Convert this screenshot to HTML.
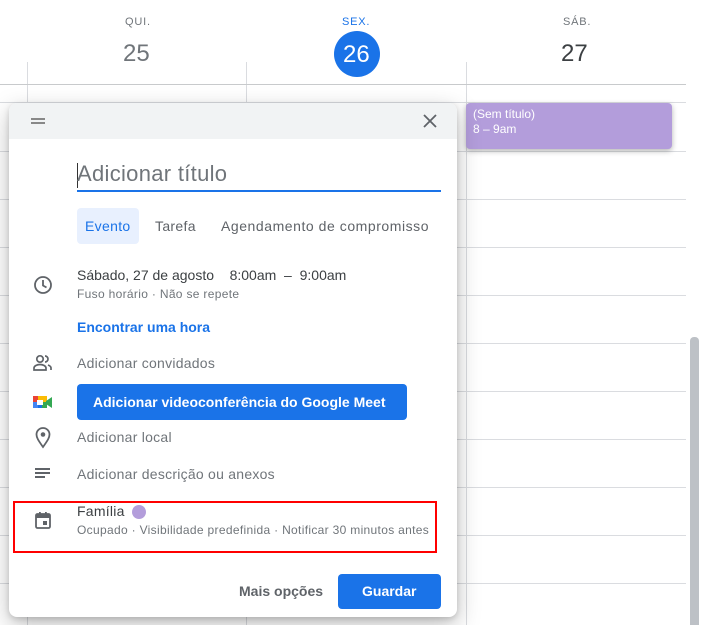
<!DOCTYPE html>
<html><head><meta charset="utf-8"><style>
*{margin:0;padding:0;box-sizing:border-box}
body{width:703px;height:625px;overflow:hidden;background:#fff;font-family:"Liberation Sans",Arial,sans-serif;position:relative;color:#3c4043}
.a{position:absolute}
.h{position:absolute;left:0;width:686px;height:1px;background:#dadce0}
.v{position:absolute;top:62px;width:1px;height:563px;background:#dadce0}
.t{position:absolute;white-space:nowrap}
.s{letter-spacing:.32px}
.g{letter-spacing:.25px}
</style></head><body>
<div class="t" style="left:125px;top:16px;font-size:11px;color:#70757a;letter-spacing:.8px">QUI.</div>
<div class="t" style="left:123px;top:40px;font-size:24px;color:#70757a">25</div>
<div class="t" style="left:342px;top:16px;font-size:11px;color:#1a73e8;letter-spacing:.8px">SEX.</div>
<div class="a" style="left:334px;top:31px;width:46px;height:46px;border-radius:50%;background:#1a73e8"></div>
<div class="t" style="left:343px;top:41px;font-size:24px;color:#fff">26</div>
<div class="t" style="left:563px;top:16px;font-size:11px;color:#70757a;letter-spacing:.8px">SÁB.</div>
<div class="t" style="left:561px;top:40px;font-size:24px;color:#3c4043">27</div>
<div class="v" style="left:27px"></div><div class="v" style="left:246px"></div><div class="v" style="left:466px"></div>
<div class="h" style="top:84px;background:#c8cacc"></div>
<div class="h" style="top:102px"></div>
<div class="h" style="top:151px"></div><div class="h" style="top:199px"></div><div class="h" style="top:247px"></div><div class="h" style="top:295px"></div><div class="h" style="top:343px"></div><div class="h" style="top:391px"></div><div class="h" style="top:439px"></div><div class="h" style="top:487px"></div><div class="h" style="top:535px"></div><div class="h" style="top:583px"></div>
<div class="a" style="left:690px;top:337px;width:9px;height:288px;background:#bdc1c6;border-radius:4px 4px 0 0"></div>
<div class="a" style="left:466px;top:103px;width:206px;height:46px;background:#b39ddb;border-radius:4px;box-shadow:0 2px 6px rgba(0,0,0,.3)"></div>
<div class="t" style="left:473px;top:107px;font-size:12px;color:#fff">(Sem título)</div>
<div class="t" style="left:473px;top:122px;font-size:12px;color:#fff">8 – 9am</div>

<div class="a" style="left:9px;top:103px;width:448px;height:514px;background:#fff;border-radius:8px;box-shadow:0 8px 24px rgba(0,0,0,.25),0 2px 6px rgba(0,0,0,.15);overflow:hidden">
 <div class="a" style="left:0;top:0;width:448px;height:36px;background:#f1f3f4"></div>
 <div class="a" style="left:22px;top:15px;width:14px;height:1.5px;background:#888"></div>
 <div class="a" style="left:22px;top:19px;width:14px;height:1.5px;background:#888"></div>
 <svg class="a" style="left:414px;top:11px" width="14" height="14"><path d="M1 1L13 13M13 1L1 13" stroke="#5f6368" stroke-width="1.8"/></svg>
 <div class="a" style="left:68px;top:60px;width:1px;height:25px;background:#333"></div>
 <div class="t" style="left:68px;top:58px;font-size:22px;color:#70757a;letter-spacing:.3px">Adicionar título</div>
 <div class="a" style="left:68px;top:87px;width:364px;height:2px;background:#1a73e8"></div>
 <div class="a" style="left:68px;top:105px;width:62px;height:36px;background:#e8f0fe;border-radius:4px"></div>
 <div class="t s" style="left:76px;top:115px;font-size:14px;color:#1a73e8">Evento</div>
 <div class="t s" style="left:146px;top:115px;font-size:14px;color:#5f6368">Tarefa</div>
 <div class="t" style="left:212px;top:115px;font-size:14px;color:#5f6368;letter-spacing:.55px">Agendamento de compromisso</div>
 <svg class="a" style="left:24px;top:172px" width="20" height="20"><circle cx="10" cy="10" r="8" fill="none" stroke="#5f6368" stroke-width="1.8"/><path d="M10 5v5.5l3.5 2" fill="none" stroke="#5f6368" stroke-width="1.8"/></svg>
 <div class="t" style="left:68px;top:164px;font-size:14px;color:#3c4043">Sábado, 27 de agosto&nbsp;&nbsp;&nbsp; 8:00am &nbsp;–&nbsp; 9:00am</div>
 <div class="t s" style="left:68px;top:184px;font-size:12px;color:#70757a">Fuso horário · Não se repete</div>
 <div class="t" style="left:68px;top:216px;font-size:14px;color:#1a73e8;font-weight:bold">Encontrar uma hora</div>
 <svg class="a" style="left:24px;top:251px" width="20" height="18"><circle cx="7" cy="5" r="3.2" fill="none" stroke="#5f6368" stroke-width="1.7"/><path d="M1 16v-2c0-2 3-3.5 6-3.5s6 1.5 6 3.5v2z" fill="none" stroke="#5f6368" stroke-width="1.7"/><path d="M12 2a3 3 0 010 6M15 11c2 .7 3 1.7 3 3v2" fill="none" stroke="#5f6368" stroke-width="1.7"/></svg>
 <div class="t g" style="left:68px;top:252px;font-size:14px;color:#70757a">Adicionar convidados</div>
 <svg class="a" style="left:24px;top:290px" width="20" height="18"><rect x="0" y="3" width="14" height="12" fill="#fbbc04"/><rect x="0" y="9" width="14" height="6" fill="#1a73e8"/><rect x="0" y="3" width="5" height="12" fill="#4285f4"/><rect x="0" y="3" width="5" height="6" fill="#ea4335"/><rect x="9" y="9" width="5" height="6" fill="#34a853"/><rect x="4" y="7" width="6" height="5" fill="#fff"/><path d="M13 8l6-4v11l-6-4z" fill="#34a853"/></svg>
 <div class="a" style="left:68px;top:281px;width:330px;height:36px;background:#1a73e8;border-radius:4px"></div>
 <div class="t" style="left:84px;top:291px;font-size:14px;color:#fff;font-weight:bold">Adicionar videoconferência do Google Meet</div>
 <svg class="a" style="left:26px;top:324px" width="16" height="22"><path d="M8 20C3 13 1.5 10.5 1.5 7.5a6.5 6.5 0 0113 0c0 3-1.5 5.5-6.5 12.5z" fill="none" stroke="#5f6368" stroke-width="1.8"/><circle cx="8" cy="7.5" r="2.3" fill="#5f6368"/></svg>
 <div class="t g" style="left:68px;top:326px;font-size:14px;color:#70757a">Adicionar local</div>
 <div class="a" style="left:26px;top:365px;width:15px;height:2px;background:#5f6368"></div>
 <div class="a" style="left:26px;top:369px;width:15px;height:2px;background:#5f6368"></div>
 <div class="a" style="left:26px;top:373px;width:10px;height:2px;background:#5f6368"></div>
 <div class="t g" style="left:68px;top:363px;font-size:14px;color:#70757a">Adicionar descrição ou anexos</div>
 <svg class="a" style="left:26px;top:408px" width="16" height="18"><rect x="1" y="3" width="14" height="14" rx="1.5" fill="none" stroke="#5f6368" stroke-width="1.8"/><rect x="1" y="3" width="14" height="4" fill="#5f6368"/><rect x="4" y="1" width="1.8" height="3" fill="#5f6368"/><rect x="10" y="1" width="1.8" height="3" fill="#5f6368"/><rect x="8" y="10" width="4" height="4" fill="#5f6368"/></svg>
 <div class="t g" style="left:68px;top:400px;font-size:14px;color:#3c4043">Família</div>
 <div class="a" style="left:123px;top:402px;width:14px;height:14px;border-radius:50%;background:#b39ddb"></div>
 <div class="t s" style="left:68px;top:420px;font-size:12px;color:#70757a">Ocupado · Visibilidade predefinida · Notificar 30 minutos antes</div>
 <div class="t" style="left:230px;top:480px;font-size:14px;color:#5f6368;font-weight:bold">Mais opções</div>
 <div class="a" style="left:329px;top:471px;width:103px;height:35px;background:#1a73e8;border-radius:4px"></div>
 <div class="t" style="left:353px;top:480px;font-size:14px;color:#fff;font-weight:bold">Guardar</div>
</div>
<div class="a" style="left:13px;top:501px;width:424px;height:52px;border:2px solid #f00"></div>
</body></html>
